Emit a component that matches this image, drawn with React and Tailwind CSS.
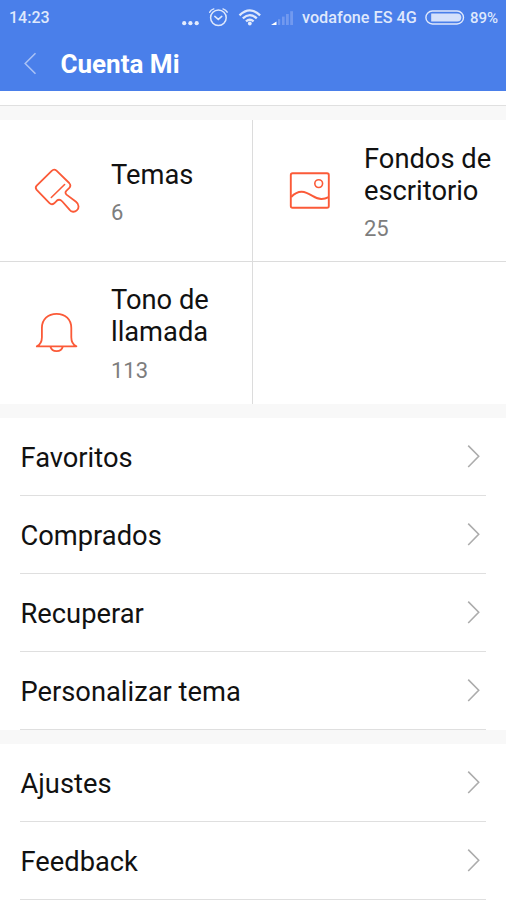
import clsx from "clsx";

const TILES = [
  { label: "Temas", count: 6, icon: BrushIcon },
  { label: "Fondos de escritorio", count: 25, icon: WallpaperIcon },
  { label: "Tono de llamada", count: 113, icon: BellIcon },
  null,
];

const GROUPS = [
  ["Favoritos", "Comprados", "Recuperar", "Personalizar tema"],
  ["Ajustes", "Feedback"],
];

// ── Icons ──
function BrushIcon() {
  return (
    <svg width="48" height="48" viewBox="0 0 48 48" fill="none" stroke="#fb5a38" strokeWidth="1.8" strokeLinecap="round" strokeLinejoin="round">
      <path d="M19.7 3.8 C21.1 2.4 23.1 2.4 24.5 3.7 L37.2 16 C38.8 17.8 38.7 19.6 37.1 21.2 L34.3 23.8 C33.1 25.1 33.2 26.5 34.5 27.6 L44 34.8 C47.2 37.3 47.3 41.2 44.8 43.4 C42.6 45.4 39.5 45.2 37.5 42.7 L30.3 34.5 C28.5 32.6 26.3 32.4 24.7 33.8 L22.2 36.3 C20.8 37.5 18.8 37.4 17.5 36.1 L4.7 22.9 C3.5 21.5 3.5 19.9 4.7 18.6 Z" />
      <path d="M19.3 30.5 L32.6 17.5" strokeWidth="1.6" />
    </svg>
  );
}

function WallpaperIcon() {
  return (
    <svg width="48" height="48" viewBox="0 0 48 48" fill="none" stroke="#fb5a38" strokeWidth="1.9">
      <rect x="5.8" y="6.2" width="38" height="34.6" rx="1.8" />
      <circle cx="33.7" cy="16.6" r="3.9" strokeWidth="1.6" />
      <path d="M6.2 30 C10 26 15.5 23.4 21.5 25.8 C28 28.4 30.5 32.2 36.5 32 C39.5 32 41.7 31.2 43.6 30.2" />
    </svg>
  );
}

function BellIcon() {
  return (
    <svg width="48" height="48" viewBox="0 0 48 48" fill="none" stroke="#fb5a38" strokeWidth="1.8" strokeLinejoin="round">
      <path d="M4.8 37.4 C8.8 35.4 9.9 32.8 9.9 28.2 V18.9 C9.9 10.4 16 4.8 24.6 4.8 S39.3 10.4 39.3 18.9 V28.2 C39.3 32.8 40.4 35.4 44.4 37.4 Z" />
      <path d="M18.5 37.8 C19.1 40.4 21.5 42.2 24.6 42.2 S30.1 40.4 30.7 37.8" />
    </svg>
  );
}

function Chevron() {
  return (
    <svg width="14" height="24" viewBox="0 0 14 24" fill="none" stroke="#acacac" strokeWidth="1.6">
      <path d="M1.2 0.6 L11.7 11.3 L1.2 22" />
    </svg>
  );
}

function StatusIcons() {
  return (
    <svg width="114" height="28" viewBox="181 4 114 28" fill="none" stroke="#dfe8fc" strokeLinecap="round" className="shrink-0">
      <g fill="#e4ecfd" stroke="none">
        <circle cx="184.2" cy="23.2" r="2.1" />
        <circle cx="190.4" cy="23.2" r="2.1" />
        <circle cx="196.7" cy="23.2" r="2.1" />
      </g>
      {/* alarm */}
      <circle cx="218.4" cy="17.8" r="7.8" strokeWidth="1.5" />
      <path d="M214.8 16.4 L218.3 19.4 L221.8 16.4" strokeWidth="1.5" />
      <path d="M209.7 12.2 Q210.8 9.8 213.8 8.9 M223 8.9 Q226 9.8 227.2 12.2" strokeWidth="1.5" />
      {/* wifi */}
      <g strokeWidth="2.3" strokeLinecap="butt">
        <path d="M239.5 15.3 Q249.8 5.5 260.1 15.3" />
        <path d="M242.8 18.4 Q249.8 11.9 256.8 18.4" />
        <path d="M246 21.4 Q249.8 18 253.6 21.4" />
      </g>
      <circle cx="249.8" cy="23.5" r="1.9" fill="#e4ecfd" stroke="none" />
      {/* signal */}
      <path d="M271 25 L276.5 21.5 V25 Z" fill="#fff" stroke="none" />
      <g fill="#7299ef" stroke="none">
        <rect x="278" y="19.2" width="2.2" height="5.8" />
        <rect x="282" y="16.6" width="2.6" height="8.4" />
        <rect x="286" y="14" width="2.8" height="11" />
        <rect x="290.2" y="11.2" width="2.8" height="13.8" />
      </g>
    </svg>
  );
}

function Battery() {
  return (
    <svg width="40" height="16" viewBox="0 0 40 16" fill="none" className="shrink-0">
      <rect x="0.9" y="1" width="37.6" height="13" rx="6.5" stroke="#dfe8fc" strokeWidth="1.4" />
      <path d="M6.2 3.4 H32.2 A4.1 4.1 0 0 1 32.2 11.6 H6.2 Z" fill="#d5e1fb" />
    </svg>
  );
}

// ── Sections ──
function Header() {
  return (
    <header className="h-[91px] bg-[#4a7fea]">
      <div className="flex h-9 items-center pl-[9px] text-base font-medium text-[#dfe8fc]">
        <span>14:23</span>
        <div className="flex-1" />
        <StatusIcons />
        <span className="ml-[7px] w-[116px] whitespace-nowrap text-[16.2px]">vodafone ES 4G</span>
        <div className="ml-[7px] flex"><Battery /></div>
        <span className="ml-[5px] w-[36px] text-[15px]">89%</span>
      </div>
      <div className="flex h-[55px] items-center pl-6">
        <svg width="14" height="24" viewBox="0 0 14 24" fill="none" stroke="#a9c2f5" strokeWidth="1.6">
          <path d="M11.5 1.2 L1.2 11.5 L11.5 21.8" />
        </svg>
        <h1 className="ml-[22.5px] text-[26px] font-bold leading-8 text-white">Cuenta Mi</h1>
      </div>
    </header>
  );
}

function Tile({ tile, index }) {
  return (
    <div
      className={clsx(
        "flex items-center border-[#dcdcdc] bg-white pl-8",
        index % 2 === 0 && "border-r",
        index < 2 && "border-b"
      )}
    >
      {tile && (
        <>
          <tile.icon />
          <div className={clsx("ml-[31px] flex-1", index < 2 ? "pt-[3px]" : "pt-0.5")}>
            <div className="w-[135px] text-[27.3px] leading-8 text-[#111]">{tile.label}</div>
            <div className={clsx("text-[22px] leading-[26px] text-[#7d7d7d]", index < 2 ? "mt-[9px]" : "mt-2.5")}>{tile.count}</div>
          </div>
        </>
      )}
    </div>
  );
}

function MenuRow({ label }) {
  return (
    <li className="mx-5 flex h-[78px] items-center justify-between border-b border-[#dfdfdf] pr-[5px]">
      <span className="pl-[0.5px] pt-0.5 text-[27.3px] leading-8 text-[#111]">{label}</span>
      <Chevron />
    </li>
  );
}

export default function App() {
  return (
    <div className="h-[900px] w-[506px] overflow-hidden bg-[#f8f8f8] font-['Roboto',sans-serif]">
      <Header />
      <div className="h-[15px] border-b border-[#e0e0e0] bg-white" />
      <div className="mt-3.5 grid grid-cols-[253px_253px] grid-rows-[142px_142px]">
        {TILES.map((tile, i) => (
          <Tile key={i} tile={tile} index={i} />
        ))}
      </div>
      {GROUPS.map((rows) => (
        <ul key={rows[0]} className="mt-3.5 bg-white">
          {rows.map((label) => (
            <MenuRow key={label} label={label} />
          ))}
        </ul>
      ))}
    </div>
  );
}
